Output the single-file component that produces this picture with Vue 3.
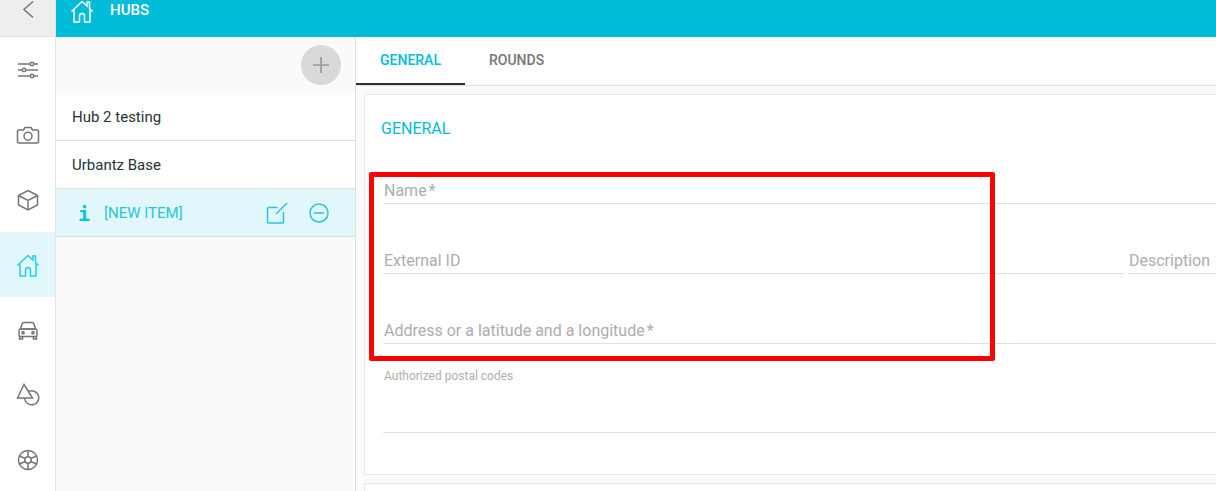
<script setup>
const rail = ['sliders', 'camera', 'box', 'home', 'car', 'shapes', 'wheel']
</script>

<template>
  <div class="page">
    <nav class="rail">
      <button class="back">
        <svg width="14" height="20" viewBox="0 0 14 20"><path d="M12 1.500 3 9.500l9 8" fill="none" stroke="#757575" stroke-width="1.500" /></svg>
      </button>
      <div v-for="r in rail" :key="r" class="rail-item" :class="{ active: r === 'home' }">
        <svg width="24" height="24" viewBox="0 0 24 24" fill="none" stroke="currentColor" stroke-width="1.500">
          <template v-if="r === 'sliders'">
            <path d="M2 6h20M2 12h20M2 18h20" />
            <circle cx="16" cy="6" r="1.700" fill="#fff" /><circle cx="8" cy="12" r="1.700" fill="#fff" /><circle cx="16" cy="18" r="1.700" fill="#fff" />
          </template>
          <template v-else-if="r === 'camera'">
            <path d="M3 7h4.500L9 4.500h6L16.500 7H21a1.500 1.500 0 0 1 1.500 1.500v10A1.500 1.500 0 0 1 21 20H3a1.500 1.500 0 0 1-1.500-1.500v-10A1.500 1.500 0 0 1 3 7Z" />
            <circle cx="12" cy="13.200" r="4" />
          </template>
          <template v-else-if="r === 'box'">
            <path d="M12 2.500 21.500 7.500v9.500L12 22 2.500 17V7.500Z" /><path d="M2.500 7.500 12 12.500l9.500-5M12 12.500V22" />
          </template>
          <template v-else-if="r === 'home'">
            <path d="M1.500 12.500 12 2.500l5 4.500V3h2.500v6.500l3 3" /><path d="M4 10.500V23H9.500v-6a2.500 2.500 0 0 1 5 0V23H20V10.500" />
          </template>
          <template v-else-if="r === 'car'">
            <path d="M4.500 11 6 5.800A2 2 0 0 1 8 4.500h8a2 2 0 0 1 2 1.300L19.500 11" />
            <rect x="3" y="11" width="18" height="7.500" rx="1.500" />
            <path d="M3.500 18.500V21h3v-2.500M17.500 18.500V21h3v-2.500M4.500 11h15" />
            <circle cx="7" cy="14.700" r="1.100" /><circle cx="17" cy="14.700" r="1.100" />
          </template>
          <template v-else-if="r === 'shapes'">
            <path d="M8 1.500 16.500 15H1.500Z" />
            <path d="M12.300 8.700A7 7 0 1 1 8.700 15" />
          </template>
          <template v-else>
            <circle cx="12" cy="12" r="9.500" /><circle cx="12" cy="12" r="3.200" />
            <path d="M12 2.500v6.300M12 15.200v6.300M3.500 8l5.700 2.500M14.800 13.500l5.700 2.500M3.500 16l5.700-2.500M14.800 10.500 20.500 8" />
          </template>
        </svg>
      </div>
    </nav>

    <div class="main">
      <header class="topbar">
        <svg class="top-home" width="24" height="24" viewBox="0 0 24 24" fill="none" stroke="#fff" stroke-width="1.500">
          <path d="M1.500 12.500 12 2.500l5 4.500V3h2.500v6.500l3 3" /><path d="M4 10.500V23H9.500v-6a2.500 2.500 0 0 1 5 0V23H20V10.500" />
        </svg>
        <span class="title">HUBS</span>
      </header>

      <div class="body">
        <aside class="list">
          <div class="list-head">
            <button class="add">
              <svg width="16" height="16" viewBox="0 0 16 16"><path d="M8 0v16M0 8h16" stroke="#999" stroke-width="1.700" /></svg>
            </button>
          </div>
          <div class="list-row">Hub 2 testing</div>
          <div class="list-row">Urbantz Base</div>
          <div class="list-row selected">
            <span class="info">i</span>
            <span class="new-item">[NEW ITEM]</span>
            <svg class="edit" width="22" height="22" viewBox="0 0 22 22" fill="none" stroke="#26c6da" stroke-width="1.500">
              <path d="M11.500 5.500H3a1.500 1.500 0 0 0-1.500 1.500v12.500A1.500 1.500 0 0 0 3 21h13a1.500 1.500 0 0 0 1.500-1.500V10" />
              <path d="M10 12 21 1" />
            </svg>
            <svg class="minus" width="20" height="20" viewBox="0 0 20 20" fill="none" stroke="#26c6da" stroke-width="1.500">
              <circle cx="10" cy="10" r="9" /><path d="M5 10h10" />
            </svg>
          </div>
        </aside>

        <section class="detail">
          <div class="tabs">
            <div class="tab on">GENERAL</div>
            <div class="tab">ROUNDS</div>
          </div>
          <div class="scroll">
            <div class="card">
              <h2>GENERAL</h2>
              <div class="field name"><span>Name<i>*</i></span></div>
              <div class="two">
                <div class="field ext"><span>External ID</span></div>
                <div class="field desc"><span>Description</span></div>
              </div>
              <div class="field addr"><span>Address or a latitude and a longitude<i>*</i></span></div>
              <div class="postal">Authorized postal codes</div>
            </div>
            <div class="card next"></div>
          </div>
        </section>
      </div>
    </div>

    <div class="highlight"></div>
  </div>
</template>

<style>
html, body { margin: 0; overflow: hidden; }
</style>

<style scoped>
.page {
  position: relative;
  display: flex;
  width: 1216px;
  height: 491px;
  overflow: hidden;
  background: #fff;
  font-family: Roboto, "Liberation Sans", sans-serif;
}
.rail {
  width: 55px;
  flex: none;
  border-right: 1px solid #e4e4e4;
  color: #757575;
}
.back {
  display: flex;
  align-items: flex-start;
  justify-content: center;
  width: 55px;
  height: 37px;
  padding: 0;
  border: 0;
  border-bottom: 1px solid #e0e0e0;
  background: #eee;
  box-sizing: border-box;
}
.rail-item {
  display: flex;
  align-items: center;
  justify-content: center;
  height: 65px;
}
.rail-item.active {
  background: #e1f7fb;
  color: #26d0e4;
}
.main {
  flex: 1;
  min-width: 0;
  display: flex;
  flex-direction: column;
}
.topbar {
  display: flex;
  align-items: flex-start;
  flex: none;
  height: 37px;
  background: #00bcd8;
  color: #fff;
}
.top-home { margin: 0 0 0 14px; position: relative; top: -1px; }
.title {
  margin-left: 16px;
  font-size: 15px;
  font-weight: 500;
  line-height: 21px;
}
.body { flex: 1; display: flex; min-height: 0; }
.list {
  width: 299px;
  flex: none;
  background: #fafafa;
  border-right: 1px solid #e0e0e0;
}
.list-head {
  display: flex;
  justify-content: flex-end;
  align-items: center;
  height: 56px;
  padding-right: 14px;
  box-sizing: border-box;
}
.add {
  display: flex;
  align-items: center;
  justify-content: center;
  width: 40px;
  height: 40px;
  padding: 0;
  border: 0;
  border-radius: 50%;
  background: #d9d9d9;
}
.list-row {
  display: flex;
  align-items: center;
  height: 48px;
  padding-left: 16px;
  box-sizing: border-box;
  border-bottom: 1px solid #e0e0e0;
  background: #fff;
  font-size: 15px;
  color: #263238;
}
.list-row.selected {
  background: #e1f7fb;
  border-bottom-color: #cfdfe3;
  color: #26c6da;
}
.info {
  width: 24px;
  padding-top: 2px;
  text-align: center;
  font-family: "DejaVu Sans Mono", monospace;
  font-size: 20px;
  font-weight: 700;
  color: #00c4dc;
}
.new-item { margin-left: 8px; flex: 1; }
.edit { margin-right: 21px; }
.minus { margin-right: 26px; }
.detail {
  flex: 1;
  min-width: 0;
  display: flex;
  flex-direction: column;
  background: #fafafa;
}
.tabs {
  display: flex;
  flex: none;
  height: 49px;
  box-sizing: border-box;
  border-bottom: 1px solid #e0e0e0;
  background: #fff;
}
.tab {
  padding: 0 24px;
  height: 48px;
  line-height: 46px;
  box-sizing: border-box;
  font-size: 14px;
  font-weight: 500;
  color: #757575;
}
.tab.on {
  width: 109px;
  color: #00bcd8;
  border-bottom: 2px solid #263238;
}
.scroll { padding: 8px 0 0 8px; }
.card {
  height: 381px;
  box-sizing: border-box;
  padding: 0 0 0 18px;
  background: #fff;
  border: 1px solid #e6e6e6;
  border-right: 0;
  border-radius: 2px 0 0 2px;
}
.card.next { height: 60px; margin-top: 8px; }
h2 {
  margin: 0 0 0 -2px;
  padding-top: 24px;
  height: 67px;
  box-sizing: border-box;
  font-size: 16px;
  font-weight: 400;
  line-height: 20px;
  color: #00bcd8;
}
.field {
  display: flex;
  align-items: flex-end;
  height: 41px;
  box-sizing: border-box;
  padding: 0 0 2px 1px;
  border-bottom: 1px solid #e0e0e0;
  font-size: 16px;
  line-height: 20px;
  color: #adadad;
}
.field i { font-style: normal; margin-left: 2px; }
.name { margin-top: 1px; margin-bottom: 29px; }
.two { display: flex; gap: 4px; margin-bottom: 29px; }
.ext { width: 741px; flex: none; }
.desc { flex: 1; }
.postal {
  position: relative;
  margin: 26px 0 0 1px;
  height: 63px;
  box-sizing: border-box;
  font-size: 12px;
  line-height: 13px;
  color: #b0b0b0;
}
.postal::after {
  content: "";
  position: absolute;
  left: -1px;
  right: 0;
  bottom: 0;
  border-bottom: 1px solid #e0e0e0;
}
.highlight {
  position: absolute;
  left: 369px;
  top: 172px;
  width: 626px;
  height: 189px;
  box-sizing: border-box;
  border: 5px solid #ff0000;
  border-radius: 2px;
  pointer-events: none;
}
</style>
